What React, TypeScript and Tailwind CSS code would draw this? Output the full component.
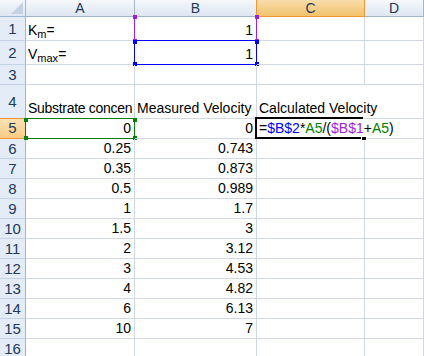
import * as React from "react";

const cols = ["A", "B", "C", "D"];

const data: [string, string][] = [
  ["0", "0"],
  ["0.25", "0.743"],
  ["0.35", "0.873"],
  ["0.5", "0.989"],
  ["1", "1.7"],
  ["1.5", "3"],
  ["2", "3.12"],
  ["3", "4.53"],
  ["4", "4.82"],
  ["6", "6.13"],
  ["10", "7"],
];

const rowHeights = [24, 24, 20, 34, 20, 20, 20, 20, 20, 20, 20, 20, 20, 20, 20, 20];

function Formula() {
  return (
    <span className="relative z-20">
      =<span className="text-[#0000ff]">$B$2</span>*<span className="text-[#008000]">A5</span>/(
      <span className="text-[#9d1fdf]">$B$1</span>+<span className="text-[#008000]">A5</span>)
    </span>
  );
}

// reference range box drawn over a cell, with square handles on its corners
function RangeBox({ color, sides }: { color: string; sides: "all" | "x" }) {
  return (
    <div
      className={
        "absolute -top-px -left-px -right-px -bottom-px pointer-events-none " +
        (sides === "all" ? "border " : "border-x ")
      }
      style={{ borderColor: color }}
    >
      <span className="absolute -left-[2px] -top-[1px] w-[4px] h-[4px]" style={{ background: color }} />
      <span className="absolute -right-[3px] -top-[1px] w-[4px] h-[4px]" style={{ background: color }} />
      <span className="absolute -left-[2px] -bottom-[2px] w-[4px] h-[4px]" style={{ background: color }} />
      <span className="absolute -right-[3px] -bottom-[2px] w-[4px] h-[4px]" style={{ background: color }} />
    </div>
  );
}

function ActiveBox() {
  return (
    <div className="absolute -top-[2px] -left-[2px] right-[1px] -bottom-px border-y-2 border-l-2 border-black pointer-events-none">
      <span className="absolute -right-[4px] -bottom-[4px] w-[6px] h-[5px] bg-black border border-white" />
    </div>
  );
}

function cellContent(col: string, row: number): { node?: React.ReactNode; right?: boolean; overlay?: React.ReactNode } {
  if (col === "A" && row === 1)
    return { node: <span>K<sub className="text-[11px]">m</sub>=</span> };
  if (col === "A" && row === 2)
    return { node: <span>V<sub className="text-[11px]">max</sub>=</span> };
  if (col === "B" && row === 1) return { node: "1", right: true, overlay: <RangeBox color="#9d1fdf" sides="x" /> };
  if (col === "B" && row === 2) return { node: "1", right: true, overlay: <RangeBox color="#0000ff" sides="all" /> };
  if (row === 4) {
    if (col === "A") return { node: <span className="tracking-[-0.3px]">Substrate concen</span> };
    if (col === "B") return { node: "Measured Velocity" };
    if (col === "C") return { node: "Calculated Velocity" };
  }
  if (row === 5 && col === "A") return { node: data[0][0], right: true, overlay: <RangeBox color="#0b7d0b" sides="all" /> };
  if (row === 5 && col === "C") return { node: <Formula />, overlay: <ActiveBox /> };
  if (row >= 5 && row <= 15) {
    if (col === "A") return { node: data[row - 5][0], right: true };
    if (col === "B") return { node: data[row - 5][1], right: true };
  }
  return {};
}

export default function App() {
  return (
    <div className="w-[424px] h-[356px] overflow-hidden bg-white font-['Liberation_Sans',Arial,sans-serif] text-[14px] text-black">
      <div className="grid grid-cols-[26px_109px_122px_108px_1fr] grid-rows-[17px_24px_24px_20px_34px_repeat(12,20px)]">
        {/* corner */}
        <div className="flex items-end justify-end p-[2px] border-r border-b border-[#9eb6ce] bg-linear-to-b from-[#f5f8fc] to-[#dde6f1]">
          <svg width="12" height="12" viewBox="0 0 12 12">
            <polygon points="12,0 12,12 0,12" fill="#c3d1e3" />
          </svg>
        </div>
        {cols.map((c) =>
          c === "C" ? (
            <div
              key={c}
              className="flex items-center justify-center border-l border-r border-b border-[#f29536] -ml-px bg-linear-to-b from-[#f9dcaa] to-[#f2c36c] text-[#213a5a]"
            >
              {c}
            </div>
          ) : (
            <div
              key={c}
              className="flex items-center justify-center border-r border-b border-[#9eb6ce] bg-linear-to-b from-[#f5f8fc] to-[#dde6f1] text-[#213a5a]"
            >
              {c}
            </div>
          )
        )}

        {rowHeights.map((_, i) => {
          const row = i + 1;
          return (
            <React.Fragment key={row}>
              {row === 5 ? (
                <div className="flex items-center justify-center border-r border-b border-t -mt-px border-[#f29536] bg-linear-to-b from-[#fde2b4] to-[#f9cb84] text-[#213a5a] text-[15px]">
                  {row}
                </div>
              ) : (
                <div className="flex items-center justify-center border-r border-r-[#9eb6ce] border-b border-b-[#c5d2e3] bg-[#e4ecf7] text-[#213a5a] text-[15px] pt-[1px]">
                  {row}
                </div>
              )}
              {cols.map((col) => {
                const { node, right, overlay } = cellContent(col, row);
                const overflowC = col === "C" && (row === 4 || row === 5);
                const clip = col === "A" && row === 4;
                return (
                  <div
                    key={col}
                    className={
                      "relative flex items-end whitespace-nowrap leading-[17px] pb-[1px] border-b border-r border-[#d0d7e5] " +
                      (right ? "justify-end pr-[3px] " : "pl-[2px] ") +
                      (overflowC ? "border-r-transparent z-10 " : "") +
                      (clip ? "overflow-hidden " : "")
                    }
                  >
                    {node}
                    {overlay}
                  </div>
                );
              })}
            </React.Fragment>
          );
        })}
      </div>
    </div>
  );
}
